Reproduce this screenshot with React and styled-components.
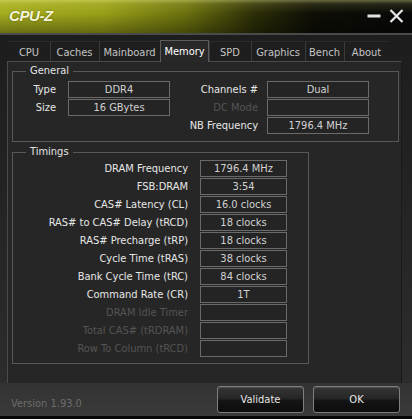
import React from "react";
import styled, { createGlobalStyle } from "styled-components";

const FONT = `"DejaVu Sans Condensed", "Liberation Sans", Arial, sans-serif`;

const GlobalStyle = createGlobalStyle`
  html, body {
    margin: 0;
    padding: 0;
    background: #111;
  }
  * {
    box-sizing: border-box;
  }
`;

const Window = styled.div`
  width: 412px;
  height: 419px;
  display: flex;
  flex-direction: column;
  overflow: hidden;
  font-family: ${FONT};
  font-size: 11px;
  background: linear-gradient(180deg, #1c1c1c 0%, #232323 45%, #2e2e2e 100%);
  border-bottom: 3px solid #070707;
`;

const TitleBar = styled.div`
  height: 35px;
  flex-shrink: 0;
  display: flex;
  align-items: center;
  padding: 0 7px 2px 9px;
  border-bottom: 2px solid #4a4a4a;
  background:
    linear-gradient(180deg, rgba(255, 255, 160, 0.38) 0%, rgba(255, 255, 140, 0.12) 12%, rgba(0, 0, 0, 0) 40%, rgba(0, 0, 0, 0.35) 100%),
    linear-gradient(90deg, #a5ad1f 0%, #989f18 25%, #6b710e 45%, #2c2e07 62%, #0e0e06 76%, #080808 100%);
`;

const Title = styled.span`
  font-family: "Liberation Sans", Arial, sans-serif;
  font-weight: bold;
  font-style: italic;
  font-size: 15px;
  letter-spacing: -0.4px;
  color: #f4f4d8;
  text-shadow: 0 0 2px rgba(60, 60, 0, 0.6);
`;

const WinButtons = styled.div`
  margin-left: auto;
  display: flex;
  align-items: center;
  gap: 6px;
`;

const WinButton = styled.div`
  width: ${(p) => p.$w}px;
  height: 22px;
  display: flex;
  align-items: center;
  justify-content: center;
`;

const TabRow = styled.div`
  display: flex;
  align-items: flex-end;
  height: 21px;
  margin: 5px 0 0 8px;
  flex-shrink: 0;
`;

const Tab = styled.div`
  width: ${(p) => p.$w}px;
  height: ${(p) => (p.$active ? 22 : 20)}px;
  margin-bottom: ${(p) => (p.$active ? -1 : 0)}px;
  position: relative;
  z-index: ${(p) => (p.$active ? 1 : 0)};
  display: flex;
  align-items: center;
  justify-content: center;
  color: ${(p) => (p.$active ? "#ffffff" : "#c4c4c4")};
  background: ${(p) => (p.$active ? "#282828" : "transparent")};
  border: 1px solid ${(p) => (p.$active ? "#5c5c5c" : "transparent")};
  border-bottom: none;
  border-left-color: ${(p) => (p.$active ? "#5c5c5c" : p.$first ? "transparent" : "#3a3a3a")};
  border-top-color: ${(p) => (p.$active ? "#5c5c5c" : "#2c2c2c")};
  padding-top: ${(p) => (p.$active ? 0 : 1)}px;
`;

const Panel = styled.div`
  flex: 1;
  margin: 0 10px 0 7px;
  padding: 0 3px 0 4px;
  background: #262626;
  border-top: 1px solid #4a4a4a;
  border-left: 1px solid #4a4a4a;
  border-right: 1px solid #1a1a1a;
`;

const Group = styled.div`
  width: ${(p) => p.$w}px;
  margin-top: ${(p) => p.$top}px;
  border: 1px solid #585858;
  padding-bottom: ${(p) => p.$bottom}px;
`;

const GroupTitle = styled.div`
  width: fit-content;
  margin: -8px 0 0 13px;
  padding: 0 4px;
  line-height: 14px;
  height: 14px;
  background: #262626;
  color: #e4e4e4;
`;

const GeneralBody = styled.div`
  display: flex;
  align-items: flex-start;
  gap: 10px;
  margin-top: 3px;
`;

const FieldGrid = styled.div`
  display: grid;
  grid-template-columns: ${(p) => p.$label}px ${(p) => p.$box}px;
  grid-auto-rows: 17px;
  column-gap: ${(p) => p.$gap}px;
  row-gap: 1px;
  margin-top: ${(p) => p.$top || 0}px;
`;

const Label = styled.div`
  text-align: right;
  line-height: 17px;
  white-space: nowrap;
  color: ${(p) => (p.$dim ? "#545454" : "#e6e6e6")};
`;

const ValueBox = styled.div`
  border: 1px solid #6a6a6a;
  background: #242424;
  color: #d2d2d2;
  text-align: center;
  line-height: 15px;
  white-space: nowrap;
`;

const Footer = styled.div`
  height: 33px;
  flex-shrink: 0;
  display: flex;
  align-items: flex-end;
  padding: 3px 12px 3px 11px;
  background: linear-gradient(180deg, #333333 0%, #3a3a3a 100%);
`;

const Version = styled.span`
  color: #6c6c6c;
  margin-bottom: 3px;
`;

const Buttons = styled.div`
  margin-left: auto;
  display: flex;
  gap: 9px;
`;

const Button = styled.button`
  width: 87px;
  height: 27px;
  border: 1px solid #7e7e7e;
  border-radius: 3px;
  font-family: ${FONT};
  font-size: 11px;
  color: #e6e6e6;
  background: linear-gradient(180deg, #363636 0%, #262626 45%, #141414 55%, #0c0c0c 100%);
  box-shadow: inset 0 1px 0 rgba(255, 255, 255, 0.12);
  padding: 0;
`;

const tabs = [
  ["CPU", 42],
  ["Caches", 49],
  ["Mainboard", 61],
  ["Memory", 49],
  ["SPD", 42],
  ["Graphics", 54],
  ["Bench", 39],
  ["About", 45],
];

const generalLeft = [
  ["Type", "DDR4"],
  ["Size", "16 GBytes"],
];

const generalRight = [
  ["Channels #", "Dual"],
  ["DC Mode", "", true],
  ["NB Frequency", "1796.4 MHz"],
];

const timings = [
  ["DRAM Frequency", "1796.4 MHz"],
  ["FSB:DRAM", "3:54"],
  ["CAS# Latency (CL)", "16.0 clocks"],
  ["RAS# to CAS# Delay (tRCD)", "18 clocks"],
  ["RAS# Precharge (tRP)", "18 clocks"],
  ["Cycle Time (tRAS)", "38 clocks"],
  ["Bank Cycle Time (tRC)", "84 clocks"],
  ["Command Rate (CR)", "1T"],
  ["DRAM Idle Timer", "", true],
  ["Total CAS# (tRDRAM)", "", true],
  ["Row To Column (tRCD)", "", true],
];

function Fields({ rows }) {
  return rows.map(([label, value, dim]) => (
    <React.Fragment key={label}>
      <Label $dim={dim}>{label}</Label>
      <ValueBox>{value}</ValueBox>
    </React.Fragment>
  ));
}

export default function App() {
  return (
    <>
      <GlobalStyle />
      <Window>
        <TitleBar>
          <Title>CPU-Z</Title>
          <WinButtons>
            <WinButton $w={16}>
              <svg width="14" height="4" viewBox="0 0 14 4">
                <rect x="0.5" y="0.5" width="13" height="3" fill="#e2e2e2" />
              </svg>
            </WinButton>
            <WinButton $w={17}>
              <svg width="15" height="14" viewBox="0 0 15 14">
                <path d="M1.5 1 L13.5 13 M13.5 1 L1.5 13" stroke="#e6e6e6" strokeWidth="2.2" />
              </svg>
            </WinButton>
          </WinButtons>
        </TitleBar>

        <TabRow>
          {tabs.map(([name, w], i) => (
            <Tab key={name} $w={w} $first={i === 0} $active={name === "Memory"}>
              {name}
            </Tab>
          ))}
        </TabRow>

        <Panel>
          <Group $w={387} $top={9} $bottom={7}>
            <GroupTitle>General</GroupTitle>
            <GeneralBody>
              <FieldGrid $label={43} $box={102} $gap={12}>
                <Fields rows={generalLeft} />
              </FieldGrid>
              <FieldGrid $label={78} $box={102} $gap={9}>
                <Fields rows={generalRight} />
              </FieldGrid>
            </GeneralBody>
          </Group>

          <Group $w={297} $top={10} $bottom={6}>
            <GroupTitle>Timings</GroupTitle>
            <FieldGrid $label={175} $box={87} $gap={12} $top={1}>
              <Fields rows={timings} />
            </FieldGrid>
          </Group>
        </Panel>

        <Footer>
          <Version>Version 1.93.0</Version>
          <Buttons>
            <Button>Validate</Button>
            <Button>OK</Button>
          </Buttons>
        </Footer>
      </Window>
    </>
  );
}
